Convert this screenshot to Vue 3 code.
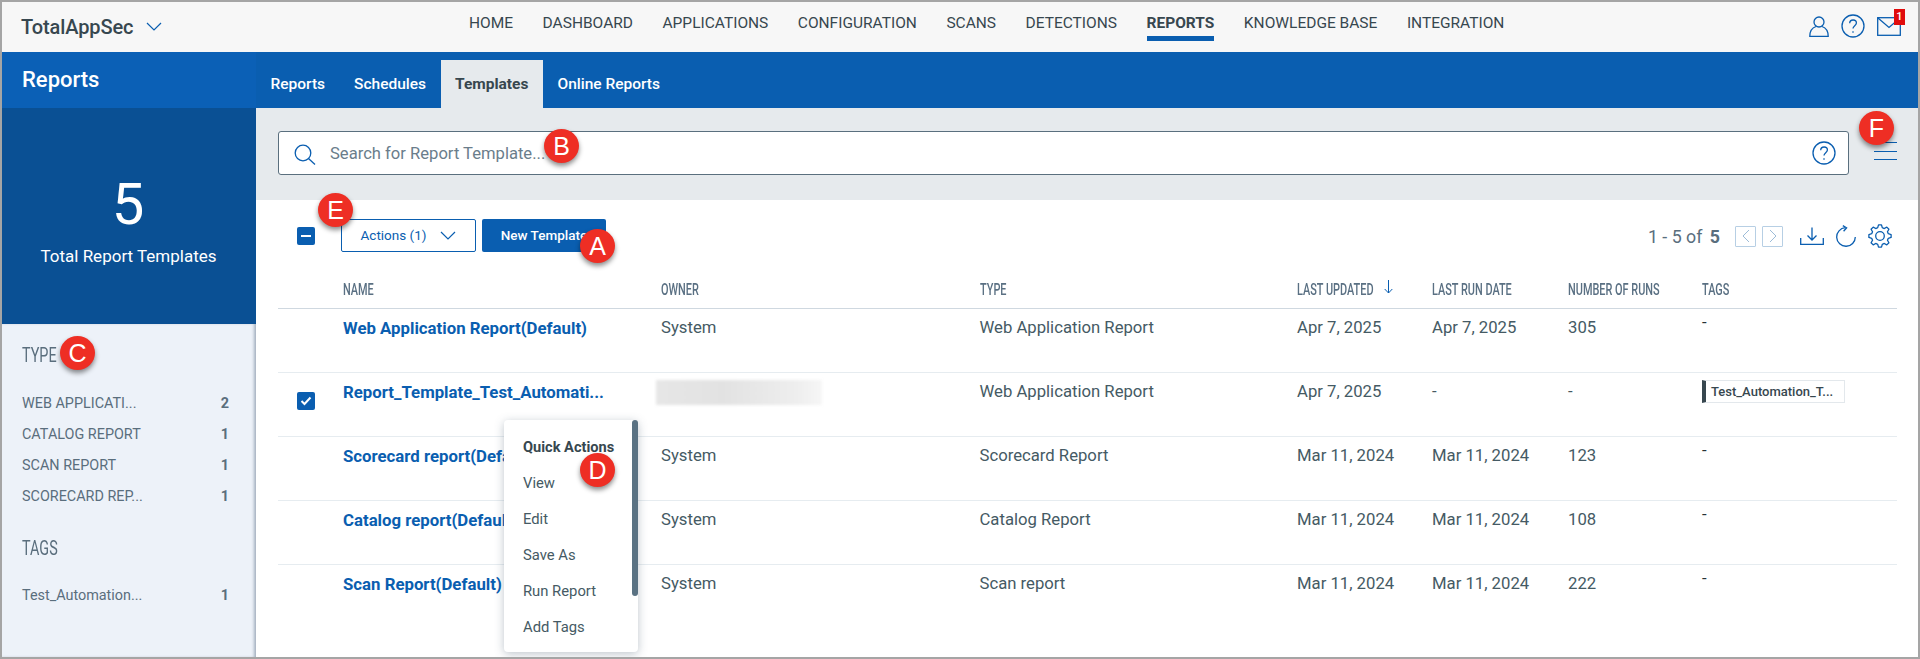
<script setup>
const nav = [
  { label: 'HOME' }, { label: 'DASHBOARD' }, { label: 'APPLICATIONS' }, { label: 'CONFIGURATION' },
  { label: 'SCANS' }, { label: 'DETECTIONS' }, { label: 'REPORTS', active: true },
  { label: 'KNOWLEDGE BASE' }, { label: 'INTEGRATION' }
]
const tabs = [
  { label: 'Reports' }, { label: 'Schedules' }, { label: 'Templates', active: true }, { label: 'Online Reports' }
]
const types = [
  { label: 'WEB APPLICATI...', n: 2 }, { label: 'CATALOG REPORT', n: 1 },
  { label: 'SCAN REPORT', n: 1 }, { label: 'SCORECARD REP...', n: 1 }
]
const cols = ['NAME', 'OWNER', 'TYPE', 'LAST UPDATED', 'LAST RUN DATE', 'NUMBER OF RUNS', 'TAGS']
const rows = [
  { name: 'Web Application Report(Default)', owner: 'System', type: 'Web Application Report', updated: 'Apr 7, 2025', run: 'Apr 7, 2025', count: '305' },
  { name: 'Report_Template_Test_Automati...', blur: true, checked: true, type: 'Web Application Report', updated: 'Apr 7, 2025', run: '-', count: '-', tag: 'Test_Automation_T...' },
  { name: 'Scorecard report(Default)', owner: 'System', type: 'Scorecard Report', updated: 'Mar 11, 2024', run: 'Mar 11, 2024', count: '123' },
  { name: 'Catalog report(Default)', owner: 'System', type: 'Catalog Report', updated: 'Mar 11, 2024', run: 'Mar 11, 2024', count: '108' },
  { name: 'Scan Report(Default)', owner: 'System', type: 'Scan report', updated: 'Mar 11, 2024', run: 'Mar 11, 2024', count: '222' }
]
const menu = ['View', 'Edit', 'Save As', 'Run Report', 'Add Tags']
const marks = [
  { l: 'A', cls: 'm-a' }, { l: 'B', cls: 'm-b' }, { l: 'C', cls: 'm-c' },
  { l: 'D', cls: 'm-d' }, { l: 'E', cls: 'm-e' }, { l: 'F', cls: 'm-f' }
]

function gearPath(teeth, outer, inner, c) {
  const pts = []
  const step = (Math.PI * 2) / teeth
  for (let i = 0; i < teeth; i++) {
    const a = i * step - Math.PI / 2
    const list = [[a - step * 0.34, inner], [a - step * 0.17, outer], [a + step * 0.17, outer], [a + step * 0.34, inner]]
    for (const [ang, r] of list) {
      pts.push((c + Math.cos(ang) * r).toFixed(2) + ' ' + (c + Math.sin(ang) * r).toFixed(2))
    }
  }
  return 'M' + pts.join('L') + 'Z'
}
const gear = gearPath(8, 11.2, 8.6, 12)
</script>

<template>
  <div class="frame">
    <header class="topbar">
      <div class="brand">
        <span class="brand-name">TotalAppSec</span>
        <svg class="brand-chev" width="16" height="9" viewBox="0 0 16 9"><path d="M1 1l7 7 7-7" /></svg>
      </div>
      <nav class="nav">
        <a v-for="n in nav" :key="n.label" class="nav-item" :class="{ active: n.active }">{{ n.label }}</a>
      </nav>
      <div class="top-icons">
        <svg class="ico" width="20" height="21" viewBox="0 0 20 21">
          <circle cx="10" cy="6" r="5" />
          <path d="M7 10.500C3 11.800 .8 15 .8 20.300h18.400C19.200 15 17 11.800 13 10.500" />
        </svg>
        <svg class="ico" width="24" height="24" viewBox="0 0 24 24">
          <circle cx="12" cy="12" r="11" />
          <path d="M8.700 9.300c0-2 1.500-3.300 3.400-3.300s3.300 1.300 3.300 3c0 2.600-3.400 2.800-3.400 5.500" />
          <path d="M12 17.200v1.500" />
        </svg>
        <div class="mail">
          <svg class="ico" width="24" height="19" viewBox="0 0 24 19">
            <rect x=".7" y=".7" width="22.600" height="17.600" />
            <path d="M.7 .7L12 10.500 23.300 .7" />
          </svg>
          <span class="mail-badge">1</span>
        </div>
      </div>
    </header>

    <div class="subbar">
      <div class="module">Reports</div>
      <div class="tabs">
        <a v-for="t in tabs" :key="t.label" class="tab" :class="{ active: t.active }">{{ t.label }}</a>
      </div>
    </div>

    <div class="body">
      <aside class="side">
        <div class="total">
          <div class="total-num">5</div>
          <div class="total-label">Total Report Templates</div>
        </div>
        <div class="facets">
          <div class="facet-title"><span class="squeeze">TYPE</span></div>
          <div v-for="t in types" :key="t.label" class="facet-row">
            <span>{{ t.label }}</span><b>{{ t.n }}</b>
          </div>
          <div class="facet-title tags-title"><span class="squeeze">TAGS</span></div>
          <div class="facet-row tag-row"><span>Test_Automation...</span><b>1</b></div>
        </div>
      </aside>

      <main class="main">
        <div class="search-band">
          <div class="search">
            <svg class="ico search-ico" width="22" height="21" viewBox="0 0 22 21">
              <circle cx="9" cy="9" r="7.800" /><path d="M14.500 14.500L21 20.500" />
            </svg>
            <span class="placeholder">Search for Report Template...</span>
            <svg class="ico search-help" width="24" height="24" viewBox="0 0 24 24">
              <circle cx="12" cy="12" r="11" />
              <path d="M8.700 9.300c0-2 1.500-3.300 3.400-3.300s3.300 1.300 3.300 3c0 2.600-3.400 2.800-3.400 5.500" />
              <path d="M12 17.200v1.500" />
            </svg>
          </div>
          <div class="burger"><i /><i /><i /></div>
        </div>

        <div class="toolbar">
          <span class="check"><i class="minus" /></span>
          <button class="btn-outline">
            Actions (1)
            <svg width="16" height="9" viewBox="0 0 16 9"><path d="M1 1l7 7 7-7" /></svg>
          </button>
          <button class="btn-solid">New Template</button>
          <div class="pager">
            <span class="pager-text">1 - 5 of <b>5</b></span>
            <span class="page-btn first">
              <svg width="8" height="14" viewBox="0 0 8 14"><path d="M7 1L1 7l6 6" /></svg>
            </span>
            <span class="page-btn">
              <svg width="8" height="14" viewBox="0 0 8 14"><path d="M1 1l6 6-6 6" /></svg>
            </span>
            <svg class="ico dl" width="24" height="18" viewBox="0 0 24 18">
              <path d="M12 .5v12M7.500 8.500l4.500 4.500 4.500-4.500" />
              <path d="M.7 11v6.300h22.600V11" />
            </svg>
            <svg class="ico refresh" width="20" height="22" viewBox="0 0 20 22">
              <path d="M19.300 12a9.300 9.300 0 1 1-10-9.300" />
              <path d="M6.800 .6l3.800 2.200-3 3.400" />
            </svg>
            <svg class="ico" width="24" height="24" viewBox="0 0 24 24">
              <circle cx="12" cy="12" r="4.300" />
              <path :d="gear" stroke-linejoin="round" />
            </svg>
          </div>
        </div>

        <div class="table">
          <div class="grid head">
            <span />
            <span v-for="c in cols" :key="c" class="head-cell">
              <span class="squeeze">{{ c }}</span>
              <svg v-if="c === 'LAST UPDATED'" class="ico sort" width="9" height="14" viewBox="0 0 9 14">
                <path d="M4.500 0v13M.7 9l3.800 4 3.800-4" />
              </svg>
            </span>
          </div>
          <div v-for="r in rows" :key="r.name" class="grid row">
            <span class="cell-check">
              <span v-if="r.checked" class="check">
                <svg width="12" height="10" viewBox="0 0 12 10"><path d="M1.500 5l3 3 6-6.500" /></svg>
              </span>
            </span>
            <a class="cell name">{{ r.name }}</a>
            <span v-if="r.blur" class="redacted" />
            <span v-else class="cell">{{ r.owner }}</span>
            <span class="cell">{{ r.type }}</span>
            <span class="cell">{{ r.updated }}</span>
            <span class="cell">{{ r.run }}</span>
            <span class="cell">{{ r.count }}</span>
            <span v-if="r.tag" class="chip">{{ r.tag }}</span>
            <span v-else class="cell dash">-</span>
          </div>
        </div>
      </main>
    </div>

    <div class="popup">
      <div class="popup-title">Quick Actions</div>
      <div v-for="m in menu" :key="m" class="popup-item">{{ m }}</div>
      <span class="popup-scroll" />
    </div>

    <span v-for="m in marks" :key="m.l" class="mark" :class="m.cls">{{ m.l }}</span>
  </div>
</template>

<style>
html, body { margin: 0; background: #fff; }
</style>

<style scoped>
* { box-sizing: border-box; }
.frame {
  position: relative;
  width: 1920px;
  height: 659px;
  border: 2px solid #a5a5a5;
  display: flex;
  flex-direction: column;
  overflow: hidden;
  background: #fff;
  font-family: Roboto, "Liberation Sans", sans-serif;
  color: #455a64;
}
.ico { fill: none; stroke: #0a5eb0; stroke-width: 1.300; display: block; }

/* top bar */
.topbar { height: 50px; flex: none; display: flex; background: #f7f7f7; }
.brand { width: 467px; flex: none; padding: 14px 0 0 19px; display: flex; align-items: flex-start; }
.brand-name { font-size: 20px; line-height: 22px; font-weight: 500; color: #37474f; letter-spacing: -.1px; }
.brand-chev { margin: 6px 0 0 13px; fill: none; stroke: #0a5eb0; stroke-width: 1.200; }
.nav { display: flex; gap: 29.500px; height: 50px; }
.nav-item { font-size: 15.500px; line-height: 20px; padding-top: 11px; height: 39px; color: #37474f; border-bottom: 5px solid transparent; white-space: nowrap; }
.nav-item.active { font-weight: 700; border-bottom-color: #0a5eb0; }
.top-icons { margin-left: auto; padding: 12px 17px 0 0; display: flex; gap: 12px; align-items: flex-start; }
.top-icons > svg:first-child { margin-top: 2px; }
.mail { position: relative; margin-top: 3px; }
.mail-badge {
  position: absolute; left: 17px; top: -8px; width: 11px; height: 16px;
  background: #e00c0c; color: #fff; font-size: 11px; line-height: 15px; text-align: center; font-weight: 500;
}

/* sub bar */
.subbar { height: 56px; flex: none; display: flex; background: #0a5eb0; }
.module { width: 254px; flex: none; background: #0b60b6; padding: 15px 0 0 20px; color: #fff; font-size: 22px; line-height: 26px; font-weight: 500; }
.tabs { display: flex; align-items: flex-end; padding-left: 0; }
.tab { height: 48px; padding: 14px 14.500px 0; color: #fff; font-size: 15.500px; line-height: 20px; font-weight: 500; }
.tab.active { background: #e6eaed; color: #37474f; font-weight: 700; }

/* body */
.body { flex: 1; display: flex; min-height: 0; }
.side { width: 254px; flex: none; background: #edf2f9; position: relative; display: flex; flex-direction: column; }
.total { height: 216px; flex: none; background: #0a5094; color: #fff; text-align: center; padding-top: 62px; }
.total-num { font-size: 58px; line-height: 68px; font-weight: 400; padding-right: 2px; }
.total-label { font-size: 17px; line-height: 20px; margin-top: 8px; padding-right: 1px; }
.facets { flex: 1; padding: 16px 27px 0 20px; color: #5a6e7d; box-shadow: inset -3px 0 3px -1px rgba(80, 100, 125, .45); }
.facet-title { height: 30px; font-size: 20px; line-height: 30px; margin-bottom: 24px; }
.squeeze { display: inline-block; transform: scaleX(.72); transform-origin: left center; white-space: nowrap; }
.facet-title .squeeze { width: 31px; }
.facet-row { display: flex; justify-content: space-between; font-size: 14.400px; height: 31px; line-height: 20px; }
.facet-row b { font-weight: 700; color: #5a6e7d; }
.tags-title { margin-top: 15px; margin-bottom: 0; }
.tag-row { margin-top: 23px; }

/* main */
.main { flex: 1; min-width: 0; display: flex; flex-direction: column; }
.search-band { height: 92px; flex: none; background: #e6eaed; padding: 23px 21px 0 22px; display: flex; align-items: flex-start; }
.search {
  width: 1572px; height: 44px; background: #fff; border: 1px solid #5a6f7e; border-radius: 3px;
  display: flex; align-items: center; padding: 0 12px 0 15px;
}
.search-ico { margin-top: 2px; }
.placeholder { margin-left: 14px; font-size: 16.600px; color: #6a7d8b; }
.search-help { margin-left: auto; }
.burger { margin: 11px 0 0 25px; width: 23px; display: flex; flex-direction: column; gap: 7.500px; }
.burger i { display: block; height: 1px; background: #0a5eb0; }

.toolbar { height: 68px; flex: none; display: flex; align-items: flex-start; padding: 19px 26px 0 41px; }
.check {
  width: 18px; height: 18px; border-radius: 2px; background: #0a5eb0; display: flex; align-items: center; justify-content: center;
}
.toolbar > .check { margin-top: 8px; }
.minus { display: block; width: 10px; height: 2px; background: #fff; }
.check svg { fill: none; stroke: #fff; stroke-width: 2; }
.btn-outline {
  margin-left: 26px; width: 135px; height: 33px; background: #fff; border: 1px solid #0a5eb0; border-radius: 2px;
  color: #0a5eb0; font: 400 13.500px Roboto, sans-serif; display: flex; align-items: center; justify-content: center; gap: 14px; padding: 0 0 1px;
}
.btn-outline svg { fill: none; stroke: #0a5eb0; stroke-width: 1.200; }
.btn-solid {
  margin-left: 6px; width: 124px; height: 33px; background: #0a5eb0; border: none; border-radius: 2px; color: #fff;
  font: 500 13.500px Roboto, sans-serif; padding: 0 0 2px; text-align: center;
}
.pager { margin-left: auto; display: flex; align-items: center; height: 28px; margin-top: 3px; }
.pager-text { font-size: 17.800px; color: #5a6e7d; margin-right: 15px; }
.pager-text b { font-weight: 700; margin-left: 3px; }
.page-btn {
  width: 21px; height: 21px; border: 1px solid #b7cfe4; border-radius: 1px; display: flex; align-items: center; justify-content: center; margin-right: 17px;
}
.page-btn.first { margin-right: 6px; }
.page-btn svg { fill: none; stroke: #9dbcd8; stroke-width: 1; }
.dl { margin-right: 12px; }
.refresh { margin-right: 12px; }

.table { margin-left: 22px; width: 1619px; }
.grid { display: grid; grid-template-columns: 65px 318px 318.500px 317.500px 135px 136px 134px 195px; }
.head { height: 41px; border-bottom: 1px solid #cfd8e0; align-items: center; }
.head-cell { color: #5a7083; display: flex; align-items: center; white-space: nowrap; line-height: 20px; padding-top: 2px; position: relative; }
.head-cell .squeeze { font-size: 16.800px; font-weight: 500; transform: scaleX(.65); }
.sort { position: absolute; left: 87px; top: 3px; stroke-width: 1; }
.row { height: 64px; border-bottom: 1px solid #e6ecf0; align-items: start; font-size: 16.700px; line-height: 20px; color: #455a64; }
.row:last-child { border-bottom: none; }
.cell { padding-top: 9px; display: block; white-space: nowrap; }
.cell.name { color: #0a5eb0; font-weight: 700; font-size: 16.800px; }
.cell.dash { padding-top: 4px; color: #263238; }
.cell-check { padding: 19px 0 0 19px; display: block; }
.redacted {
  display: block; width: 166px; height: 25px; margin: 7px 0 0 -5px;
  background: linear-gradient(90deg, #e6e6e6, #e2e2e2 40%, #eeeeee 85%, #f6f6f6); filter: blur(1.500px);
}
.chip {
  display: block; width: 143px; height: 23px; margin-top: 7px; border: 1px solid #e3e8ec; border-left: 4px solid #37474f;
  font-size: 13px; font-weight: 500; line-height: 21px; padding-left: 5px; color: #37474f; white-space: nowrap; overflow: hidden;
}

/* popup */
.popup {
  position: absolute; left: 502px; top: 418px; width: 134px; height: 232px; background: #fff; border-radius: 4px;
  box-shadow: 0 2px 10px rgba(70, 90, 110, .35); padding: 17px 0 0 19px; font-size: 14.800px; line-height: 20px; color: #455a64;
}
.popup-title { font-weight: 700; font-size: 14.600px; height: 36px; color: #37474f; }
.popup-item { height: 36px; }
.popup-scroll { position: absolute; right: 0; top: 0; width: 6px; height: 176px; background: #5a7283; border-radius: 3px; }

/* callouts */
.mark {
  position: absolute; width: 35px; height: 34px; border-radius: 50%; background: #ee2e24; color: #fff;
  font: 400 25px/34px "Liberation Sans", sans-serif; text-align: center; box-shadow: 0 3px 5px rgba(0, 0, 0, .45);
}
.m-a { left: 578px; top: 227px; }
.m-b { left: 542px; top: 127px; }
.m-c { left: 58px; top: 334px; }
.m-d { left: 578px; top: 451px; }
.m-e { left: 316px; top: 191px; }
.m-f { left: 1857px; top: 109px; }
</style>
